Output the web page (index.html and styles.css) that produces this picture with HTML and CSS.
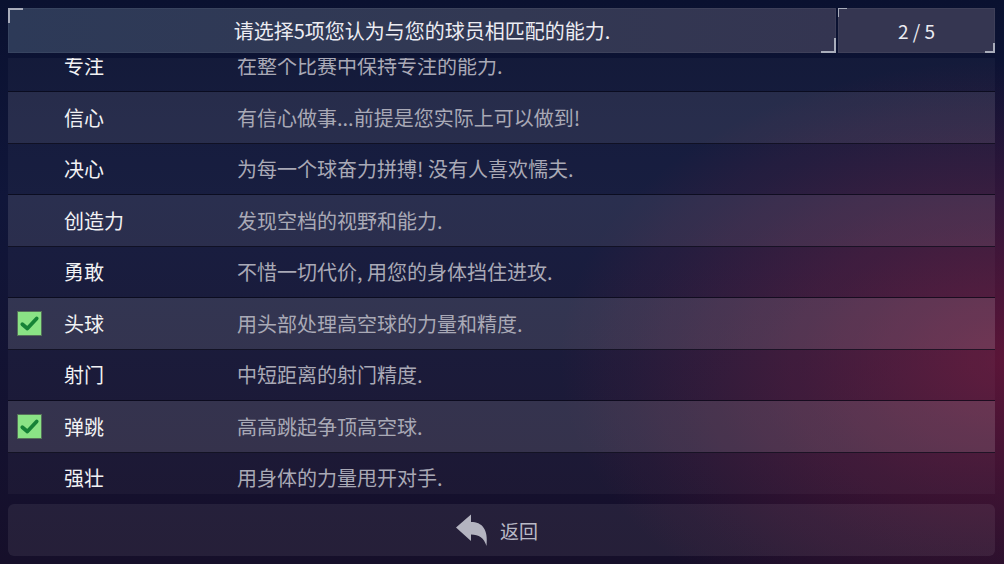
FILE: index.html
```html
<!DOCTYPE html>
<html lang="zh-CN">
<head>
  <meta charset="UTF-8">
  <title>球员能力</title>
  <link rel="stylesheet" href="styles.css">
</head>
<body>
  <div id="screen">
    <div id="topBar">
      <div class="panel" id="prompt">请选择5项您认为与您的球员相匹配的能力.</div>
      <div class="panel" id="counter">2 / 5</div>
    </div>

    <div id="listView">
      <ul id="traits">
        <li class="trait"><span class="tick"></span><span class="name">专注</span><span class="desc">在整个比赛中保持专注的能力.</span></li>
        <li class="trait"><span class="tick"></span><span class="name">信心</span><span class="desc">有信心做事...前提是您实际上可以做到!</span></li>
        <li class="trait"><span class="tick"></span><span class="name">决心</span><span class="desc">为每一个球奋力拼搏! 没有人喜欢懦夫.</span></li>
        <li class="trait"><span class="tick"></span><span class="name">创造力</span><span class="desc">发现空档的视野和能力.</span></li>
        <li class="trait"><span class="tick"></span><span class="name">勇敢</span><span class="desc">不惜一切代价, 用您的身体挡住进攻.</span></li>
        <li class="trait picked">
          <span class="tick"><svg viewBox="0 0 16 16"><path d="M3 8.5 L6.5 11.5 L13 4.5" /></svg></span>
          <span class="name">头球</span><span class="desc">用头部处理高空球的力量和精度.</span>
        </li>
        <li class="trait"><span class="tick"></span><span class="name">射门</span><span class="desc">中短距离的射门精度.</span></li>
        <li class="trait picked">
          <span class="tick"><svg viewBox="0 0 16 16"><path d="M3 8.5 L6.5 11.5 L13 4.5" /></svg></span>
          <span class="name">弹跳</span><span class="desc">高高跳起争顶高空球.</span>
        </li>
        <li class="trait"><span class="tick"></span><span class="name">强壮</span><span class="desc">用身体的力量甩开对手.</span></li>
      </ul>
    </div>

    <button id="backBtn">
      <svg viewBox="0 0 34 34" class="backIcon">
        <path d="M1 14.5 L16 1.5 L16 9 C27 9 33.5 16 31.5 33 C29 25 24 21.5 16 21.5 L16 28 Z" />
      </svg>
      <span>返回</span>
    </button>
  </div>
</body>
</html>
```

FILE: styles.css
```css
body {
  margin: 0;
  height: 564px;
  overflow: hidden;
  font-family: "Noto Sans CJK SC", "Noto Sans", sans-serif;
  background:
    radial-gradient(ellipse 600px 400px at 1010px 360px, rgba(130, 22, 58, 0.65), transparent 75%),
    linear-gradient(180deg, #0a1130 0%, #10163a 35%, #160f2a 100%);
}

#screen {
  display: flex;
  flex-direction: column;
  height: 564px;
  box-sizing: border-box;
  padding: 8px 9px 8px 8px;
}

/* top bar: prompt + counter */
#topBar {
  display: flex;
  gap: 2px;
  height: 45px;
  flex-shrink: 0;
}
.panel {
  position: relative;
  display: flex;
  align-items: center;
  justify-content: center;
  color: #ececf2;
  font-size: 20px;
  background: linear-gradient(90deg, #2d3a58 0%, #323853 60%, #343551 100%);
  box-shadow: inset 0 0 0 1px rgba(255, 255, 255, 0.05);
}
.panel::before,
.panel::after {
  content: "";
  position: absolute;
  width: 13px;
  height: 13px;
  border-color: #a9adbb;
  border-style: solid;
}
#prompt {
  flex: 1;
}
#prompt::before {
  left: 0;
  top: 0;
  border-width: 2px 0 0 2px;
}
#prompt::after {
  right: 0;
  bottom: 0;
  border-width: 0 2px 2px 0;
}
#counter {
  width: 157px;
  font-size: 19px;
  background: #353651;
}
#counter::before {
  left: 0;
  top: 0;
  width: 8px;
  height: 8px;
  border-width: 1px 0 0 1px;
}
#counter::after {
  right: 0;
  bottom: 0;
  width: 8px;
  height: 8px;
  border-width: 0 2px 2px 0;
}

/* trait list, scrolled a little */
#listView {
  height: 436px;
  margin-top: 5px;
  overflow: hidden;
  flex-shrink: 0;
}
#traits {
  list-style: none;
  margin: -17.5px 0 0;
  padding: 0;
}
.trait {
  display: grid;
  grid-template-columns: 56px 173px 1fr;
  align-items: center;
  height: 51.5px;
  box-sizing: border-box;
  border-bottom: 1px solid rgba(6, 6, 20, 0.7);
  background: rgba(255, 255, 255, 0.035);
}
.trait:nth-child(even) {
  background: rgba(255, 255, 255, 0.11);
}
.trait.picked {
  background: rgba(255, 255, 255, 0.14);
}
.name {
  color: #f2f2f4;
  font-size: 20px;
}
.desc {
  color: #a9a9b6;
  font-size: 20px;
}
.tick {
  width: 25px;
  height: 25px;
  margin-left: 9px;
}
.picked .tick {
  box-sizing: border-box;
  background: #8ae385;
  border: 1px solid #55705a;
}
.tick svg {
  display: block;
  width: 23px;
  height: 23px;
}
.tick path {
  fill: none;
  stroke: #168236;
  stroke-width: 2.6;
  stroke-linecap: round;
  stroke-linejoin: round;
}

/* back button */
#backBtn {
  display: flex;
  align-items: center;
  justify-content: center;
  gap: 11px;
  height: 52px;
  margin-top: 10px;
  padding: 0 10px 0 0;
  flex-shrink: 0;
  border: none;
  border-radius: 6px;
  background: rgba(255, 255, 255, 0.07);
  color: #b9b9c6;
  font-family: inherit;
  font-size: 19px;
  cursor: pointer;
}
.backIcon {
  width: 34px;
  height: 34px;
}
.backIcon path {
  fill: #b4b4c0;
}
```
